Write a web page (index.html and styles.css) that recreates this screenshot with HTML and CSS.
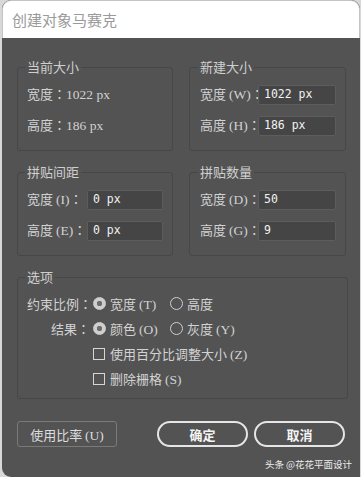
FILE: index.html
```html
<!DOCTYPE html>
<html>
<head lang="zh">
    <meta charset="UTF-8">
    <title>创建对象马赛克</title>
    <link rel="stylesheet" href="styles.css">
</head>
<body>
<div class="dialog">
    <div class="titlebar">创建对象马赛克</div>
    <div class="content">
        <div class="groups">
            <fieldset class="group">
                <legend>当前大小</legend>
                <div class="row"><span class="label">宽度<span class="colon">：</span><span class="num">1022 px</span></span></div>
                <div class="row"><span class="label">高度<span class="colon">：</span><span class="num">186 px</span></span></div>
            </fieldset>
            <fieldset class="group wide">
                <legend>新建大小</legend>
                <div class="row"><span class="label">宽度 <span class="num">(W)</span><span class="colon">：</span></span><span class="field">1022 px</span></div>
                <div class="row"><span class="label">高度 <span class="num">(H)</span><span class="colon">：</span></span><span class="field">186 px</span></div>
            </fieldset>
            <fieldset class="group">
                <legend>拼贴间距</legend>
                <div class="row"><span class="label">宽度 <span class="num">(I)</span><span class="colon">：</span></span><span class="field">0 px</span></div>
                <div class="row"><span class="label">高度 <span class="num">(E)</span><span class="colon">：</span></span><span class="field">0 px</span></div>
            </fieldset>
            <fieldset class="group wide">
                <legend>拼贴数量</legend>
                <div class="row"><span class="label">宽度 <span class="num">(D)</span><span class="colon">：</span></span><span class="field">50</span></div>
                <div class="row"><span class="label">高度 <span class="num">(G)</span><span class="colon">：</span></span><span class="field">9</span></div>
            </fieldset>
        </div>
        <fieldset class="group options">
            <legend>选项</legend>
            <div class="opt-row">
                <span class="opt-label">约束比例<span class="colon">：</span></span>
                <span class="choice first"><i class="radio on"></i><span>宽度 <span class="num">(T)</span></span></span>
                <span class="choice"><i class="radio"></i><span>高度</span></span>
            </div>
            <div class="opt-row">
                <span class="opt-label">结果<span class="colon">：</span></span>
                <span class="choice first"><i class="radio on"></i><span>颜色 <span class="num">(O)</span></span></span>
                <span class="choice"><i class="radio"></i><span>灰度 <span class="num">(Y)</span></span></span>
            </div>
            <div class="opt-row">
                <span class="opt-label"></span>
                <span class="choice"><i class="check"></i><span>使用百分比调整大小 <span class="num">(Z)</span></span></span>
            </div>
            <div class="opt-row">
                <span class="opt-label"></span>
                <span class="choice"><i class="check"></i><span>删除栅格 <span class="num">(S)</span></span></span>
            </div>
        </fieldset>
        <div class="actions">
            <span class="btn"><span>使用比率 <span class="num">(U)</span></span></span>
            <span class="btn pill">确定</span>
            <span class="btn pill">取消</span>
        </div>
        <div class="mark">头条 @花花平面设计</div>
    </div>
</div>
</body>
</html>
```

FILE: styles.css
```css
* {
    margin: 0;
    padding: 0;
    box-sizing: border-box;
}

body {
    background: #d8d8d8;
    font-family: "Noto Sans CJK SC", sans-serif;
    font-size: 13px;
    color: #d2d2d2;
}

.dialog {
    width: 358px;
    height: 477px;
    margin-left: 2px;
    background: #535353;
    border-radius: 9px 9px 0 9px;
    overflow: hidden;
}

.titlebar {
    height: 38px;
    background: #fff;
    border: 1px solid #c4c4c4;
    border-bottom: 0;
    border-radius: 9px 9px 0 0;
    padding: 8px 0 0 9px;
    font-size: 15px;
    line-height: 22px;
    color: #9a9a9a;
}

.content {
    padding: 21px 12px 0 15px;
}

.groups {
    display: grid;
    grid-template-columns: 156px 157px;
    column-gap: 16px;
    row-gap: 13px;
}

.group {
    border: 1px solid #474747;
    border-radius: 3px;
    padding: 9px 9px 15px 9px;
    min-width: 0;
}

.group legend {
    margin-left: -2px;
    padding: 0 2px;
    font-size: 13px;
    line-height: 16px;
    color: #cfcfcf;
}

.group.wide {
    padding-left: 10px;
}

.row {
    display: grid;
    grid-template-columns: 60px 76px;
    align-items: center;
    height: 20px;
    margin-bottom: 11px;
}

.row:last-child {
    margin-bottom: 0;
}

.wide .row {
    grid-template-columns: 58px 78px;
}

.label {
    white-space: nowrap;
    line-height: 20px;
}

.colon {
    font-family: "Noto Sans CJK TC", sans-serif;
}

.num {
    font-family: "Liberation Serif", serif;
    font-size: 13.5px;
}

.field {
    height: 20px;
    background: #454545;
    border: 1px solid #5d5d5d;
    border-radius: 2px;
    padding-left: 5px;
    font-family: "DejaVu Sans Mono", monospace;
    font-size: 11.5px;
    line-height: 17px;
    color: #f2f2f2;
}

.options {
    margin-top: 13px;
    padding: 8px 9px 9px 9px;
}

.opt-row {
    display: flex;
    align-items: center;
    height: 21px;
    margin-bottom: 4px;
}

.opt-row:last-child {
    margin-bottom: 0;
}

.opt-label {
    width: 66px;
    padding-right: 3px;
    text-align: right;
    white-space: nowrap;
}

.choice {
    display: flex;
    align-items: center;
    gap: 4px;
    white-space: nowrap;
}

.choice.first {
    width: 77px;
}

.radio {
    width: 13px;
    height: 13px;
    border: 1px solid #cfcfcf;
    border-radius: 50%;
}

.radio.on {
    background: radial-gradient(circle, #6e6e6e 0 2.5px, #cfcfcf 3px);
}

.check {
    width: 12px;
    height: 12px;
    border: 1px solid #d6d6d6;
    margin-right: 1px;
}

.actions {
    display: flex;
    margin-top: 22px;
}

.btn {
    display: flex;
    align-items: center;
    justify-content: center;
    width: 100px;
    height: 26px;
    border: 1px solid #7a7a7a;
    border-radius: 3px;
    color: #dcdcdc;
}

.btn.pill {
    width: 91px;
    margin-left: 6px;
    border: 2px solid #e6e6e6;
    border-radius: 13px;
    font-weight: bold;
    color: #f4f4f4;
}

.btn.pill:nth-child(2) {
    margin-left: 40px;
}

.mark {
    margin-top: 10px;
    margin-right: -4px;
    text-align: right;
    font-size: 9.5px;
    line-height: 14px;
    color: #eeeeee;
}
```
